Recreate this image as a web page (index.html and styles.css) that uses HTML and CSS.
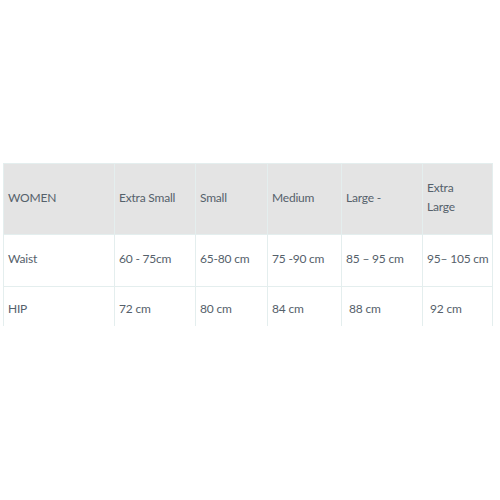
FILE: index.html
```html
<!DOCTYPE html>
<html>
<head>
<meta charset="utf-8">
<link rel="stylesheet" href="styles.css">
</head>
<body>
<div class="frame">
<table class="size-table">
  <colgroup>
    <col class="c1"><col class="c2"><col class="c3"><col class="c4"><col class="c5"><col class="c6">
  </colgroup>
  <tr class="head">
    <td>WOMEN</td><td>Extra Small</td><td>Small</td><td>Medium</td><td>Large -</td><td>Extra<br>Large</td>
  </tr>
  <tr class="row">
    <td>Waist</td><td>60 - 75cm</td><td>65-80 cm</td><td>75 -90 cm</td><td>85 – 95 cm</td><td>95– 105 cm</td>
  </tr>
  <tr class="row last">
    <td>HIP</td><td>72 cm</td><td>80 cm</td><td>84 cm</td><td><span class="ind">88 cm</span></td><td><span class="ind">92 cm</span></td>
  </tr>
</table>
</div>
</body>
</html>
```
FILE: styles.css
```css
html, body {
  margin: 0;
  padding: 0;
  background: #ffffff;
}
body {
  padding: 163px 0 0 3px;
  font-family: Lato, "Open Sans", sans-serif;
  font-size: 12px;
  letter-spacing: -0.2px;
  color: #55616b;
}
.frame {
  width: 490px;
  height: 163px;
  overflow: hidden;
}
.size-table {
  border-collapse: collapse;
  table-layout: fixed;
  width: 489px;
}
.c1 { width: 111px; }
.c2 { width: 81px; }
.c3 { width: 72px; }
.c4 { width: 74px; }
.c5 { width: 81px; }
.c6 { width: 70px; }
.size-table td {
  border: 1px solid #e4eeee;
  padding: 0 0 4px 4px;
  vertical-align: middle;
  line-height: 19px;
  white-space: nowrap;
}
.head td {
  background: #e4e4e4;
  height: 66px;
}
.row td { height: 47px; }
.last td { height: 42px; border-bottom: none; }
.ind { padding-left: 3px; }
```
